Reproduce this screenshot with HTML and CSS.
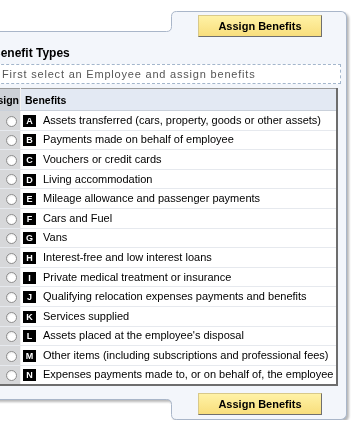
FILE: index.html
```html
<!DOCTYPE html>
<html lang="en">

<head>
    <meta charset="UTF-8">
    <meta name="viewport" content="width=device-width, initial-scale=1.0">
    <title>Benefit Types</title>
    <link rel="stylesheet" href="styles.css">
</head>

<body>
    <div class="panel">
        <div class="tab-row top">
            <div class="gap"></div>
            <svg class="corner" width="14" height="21" viewBox="0 0 14 21">
                <path d="M0 21 V20.5 H1.5 Q6.5 20.5 6.5 15.5 V5.5 Q6.5 0.5 11.5 0.5 H14 V21 Z" fill="#f3f6fb" />
                <path d="M0 20.5 H1.5 Q6.5 20.5 6.5 15.5 V5.5 Q6.5 0.5 11.5 0.5 H14" fill="none" stroke="#a9b6c9" />
            </svg>
            <div class="tab">
                <button class="assign-btn">Assign Benefits</button>
            </div>
        </div>

        <div class="panel-body">
            <h2 class="section-title">Benefit Types</h2>
            <div class="hint">First select an Employee and assign benefits</div>

            <table class="benefits">
                <thead>
                    <tr>
                        <th class="col-assign">Assign</th>
                        <th class="col-benefit">Benefits</th>
                    </tr>
                </thead>
                <tbody>
                    <tr>
                        <td class="col-assign"><input type="radio" name="benefit"></td>
                        <td><span class="code">A</span>Assets transferred (cars, property, goods or other assets)</td>
                    </tr>
                    <tr>
                        <td class="col-assign"><input type="radio" name="benefit"></td>
                        <td><span class="code">B</span>Payments made on behalf of employee</td>
                    </tr>
                    <tr>
                        <td class="col-assign"><input type="radio" name="benefit"></td>
                        <td><span class="code">C</span>Vouchers or credit cards</td>
                    </tr>
                    <tr>
                        <td class="col-assign"><input type="radio" name="benefit"></td>
                        <td><span class="code">D</span>Living accommodation</td>
                    </tr>
                    <tr>
                        <td class="col-assign"><input type="radio" name="benefit"></td>
                        <td><span class="code">E</span>Mileage allowance and passenger payments</td>
                    </tr>
                    <tr>
                        <td class="col-assign"><input type="radio" name="benefit"></td>
                        <td><span class="code">F</span>Cars and Fuel</td>
                    </tr>
                    <tr>
                        <td class="col-assign"><input type="radio" name="benefit"></td>
                        <td><span class="code">G</span>Vans</td>
                    </tr>
                    <tr>
                        <td class="col-assign"><input type="radio" name="benefit"></td>
                        <td><span class="code">H</span>Interest-free and low interest loans</td>
                    </tr>
                    <tr>
                        <td class="col-assign"><input type="radio" name="benefit"></td>
                        <td><span class="code">I</span>Private medical treatment or insurance</td>
                    </tr>
                    <tr>
                        <td class="col-assign"><input type="radio" name="benefit"></td>
                        <td><span class="code">J</span>Qualifying relocation expenses payments and benefits</td>
                    </tr>
                    <tr>
                        <td class="col-assign"><input type="radio" name="benefit"></td>
                        <td><span class="code">K</span>Services supplied</td>
                    </tr>
                    <tr>
                        <td class="col-assign"><input type="radio" name="benefit"></td>
                        <td><span class="code">L</span>Assets placed at the employee's disposal</td>
                    </tr>
                    <tr>
                        <td class="col-assign"><input type="radio" name="benefit"></td>
                        <td><span class="code">M</span>Other items (including subscriptions and professional fees)</td>
                    </tr>
                    <tr>
                        <td class="col-assign"><input type="radio" name="benefit"></td>
                        <td><span class="code">N</span>Expenses payments made to, or on behalf of, the employee</td>
                    </tr>
                </tbody>
            </table>
        </div>

        <div class="tab-row bottom">
            <div class="gap"></div>
            <svg class="corner" width="14" height="21" viewBox="0 0 14 21">
                <path d="M0 0 V0.5 H1.5 Q6.5 0.5 6.5 5.5 V15.5 Q6.5 20.5 11.5 20.5 H14 V0 Z" fill="#f3f6fb" />
                <path d="M0 0.5 H1.5 Q6.5 0.5 6.5 5.5 V15.5 Q6.5 20.5 11.5 20.5 H14" fill="none" stroke="#a9b6c9" />
            </svg>
            <div class="tab">
                <button class="assign-btn">Assign Benefits</button>
            </div>
        </div>
    </div>
</body>

</html>
```

FILE: styles.css
```css
* {
    margin: 0;
    padding: 0;
    box-sizing: border-box;
}

html,
body {
    overflow: hidden;
}

body {
    background: #ffffff;
    font-family: 'Liberation Sans', Arial, sans-serif;
    font-size: 11px;
    color: #000;
}

.panel {
    width: 387px;
    margin-left: -40px;
    margin-top: 11px;
    display: flex;
    flex-direction: column;
    filter: drop-shadow(2px 2px 1px rgba(0, 0, 0, 0.28));
}

.tab-row {
    display: flex;
    height: 21px;
}

.tab-row .gap {
    flex: 1;
}

.top .gap {
    border-bottom: 1px solid #a9b6c9;
}

.bottom .gap {
    border-top: 1px solid #a9b6c9;
}

.corner {
    display: block;
    flex: none;
}

.tab {
    flex: 0 0 168px;
    background: #f3f6fb;
    border-right: 1px solid #a9b6c9;
    padding-left: 19px;
}

.top .tab {
    border-top: 1px solid #a9b6c9;
    border-top-right-radius: 6px;
    padding-top: 3px;
}

.bottom .tab {
    border-bottom: 1px solid #a9b6c9;
    border-bottom-right-radius: 6px;
}

.bottom .assign-btn {
    margin-top: -6px;
}

.assign-btn {
    display: block;
    width: 124px;
    height: 22px;
    font-family: 'Liberation Sans', Arial, sans-serif;
    font-size: 11px;
    font-weight: bold;
    color: #000;
    background: linear-gradient(#fff2a6, #f8de7c);
    border: 1px solid #d8c98a;
    border-right-color: #6f6f6f;
    border-bottom-color: #6f6f6f;
    position: relative;
    z-index: 1;
}

.panel-body {
    background: #f3f6fb;
    border-right: 1px solid #a9b6c9;
    padding: 14px 5px 13px 16px;
}

.section-title {
    font-size: 12px;
    line-height: 14px;
    margin-left: 16px;
}

.hint {
    margin-top: 4px;
    height: 20px;
    line-height: 18px;
    padding-left: 25px;
    background: #ffffff;
    border: 1px dashed #a3b6cc;
    color: #555;
    letter-spacing: 0.8px;
}

.benefits {
    margin-top: 4px;
    width: 362px;
    border-collapse: collapse;
    background: #ffffff;
    border-top: 1px solid #9a9a9a;
    border-right: 2px solid #6d6d6d;
    border-bottom: 2px solid #6d6d6d;
    border-left: 1px solid #9a9a9a;
}

.benefits th {
    height: 22px;
    background: #e3e9f3;
    text-align: left;
    font-size: 10.5px;
    font-weight: bold;
    border-bottom: 1px solid #c9d0da;
}

.benefits th.col-benefit {
    padding-left: 4px;
}

.benefits td {
    height: 19.6px;
    border-bottom: 1px solid #e6e9ee;
    white-space: nowrap;
    padding-left: 2px;
}

.benefits .col-assign {
    width: 44px;
    background: #d6d7d9;
    text-align: right;
    padding-right: 3px;
    border-right: 1px solid #f4f4f4;
}

.benefits th.col-assign {
    background: #cdd1d7;
    padding-right: 1px;
}

.benefits tr:last-child td {
    border-bottom: none;
}

input[type="radio"] {
    appearance: none;
    display: inline-block;
    vertical-align: middle;
    width: 11px;
    height: 11px;
    border-radius: 50%;
    border: 1px solid #8d8d8d;
    background: radial-gradient(circle at 60% 60%, #ffffff 40%, #e2e2e2 100%);
}

.code {
    display: inline-block;
    width: 13px;
    height: 12px;
    line-height: 12px;
    margin-right: 7px;
    background: #000;
    color: #fff;
    font-size: 9px;
    font-weight: bold;
    text-align: center;
    vertical-align: middle;
}
```
